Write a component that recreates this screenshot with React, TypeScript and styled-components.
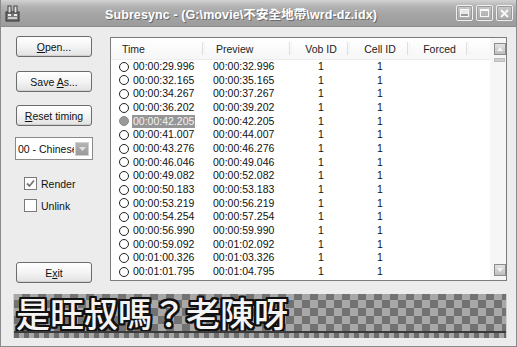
import React from "react";
import styled, { createGlobalStyle } from "styled-components";

const Global = createGlobalStyle`
  html, body { margin: 0; padding: 0; background: #ececec; }
  body { font-family: "Liberation Sans", Arial, "Noto Sans CJK TC", sans-serif; }
`;

const Window = styled.div`
  width: 517px;
  height: 347px;
  box-sizing: border-box;
  display: flex;
  flex-direction: column;
  background: #ececec;
  border: 1px solid #8a8a8a;
  border-top: none;
  overflow: hidden;
`;

const TitleBar = styled.div`
  height: 27px;
  flex: none;
  display: flex;
  align-items: center;
  padding: 0 3px 0 4px;
  background: linear-gradient(#d2d2d2 0%, #b2b2b2 25%, #a4a4a4 60%, #9c9c9c 100%);
  border-bottom: 1px solid #8c8c8c;
  box-sizing: border-box;
`;

const Title = styled.div`
  flex: 1;
  text-align: center;
  color: #fff;
  font-weight: bold;
  font-size: 12.5px;
  letter-spacing: 0.1px;
  text-shadow: 1px 1px 0 #6a6a6a;
  white-space: nowrap;
  padding-left: 6px;
  font-family: "Liberation Sans", Arial, "Noto Sans CJK TC", sans-serif;
`;

const CaptionButtons = styled.div`
  display: flex;
  gap: 3px;
`;

const CaptionButton = styled.div`
  width: 15px;
  height: 14px;
  border: 1px solid #f0f0f0;
  border-radius: 2px;
  background: linear-gradient(#c8c8c8, #a8a8a8);
  display: flex;
  align-items: center;
  justify-content: center;
  box-shadow: inset 0 0 0 1px #9a9a9a;
`;

const Main = styled.div`
  display: flex;
  gap: 16px;
  padding: 9px 9px 0 15px;
`;

const LeftCol = styled.div`
  width: 78px;
  display: flex;
  flex-direction: column;
  flex: none;
`;

const PushButton = styled.div<{ $mt?: number }>`
  width: 76px;
  height: 21px;
  margin-top: ${(p) => p.$mt ?? 0}px;
  box-sizing: border-box;
  border: 1px solid #6c6c6c;
  border-radius: 3px;
  background: linear-gradient(#ffffff 0%, #f4f4f4 50%, #e2e2e2 100%);
  box-shadow: inset 0 -1px 0 #d0d0d0;
  display: flex;
  align-items: center;
  justify-content: center;
  font-size: 10.5px;
  color: #111;
  u { text-decoration: underline; text-underline-offset: 1px; }
`;

const Combo = styled.div<{ $mt?: number }>`
  width: 78px;
  height: 23px;
  margin-top: ${(p) => p.$mt ?? 0}px;
  margin-left: -1px;
  box-sizing: border-box;
  border: 1px solid #8a8a8a;
  background: #fff;
  display: flex;
  align-items: center;
  padding: 0 2px 0 2px;
  gap: 1px;
`;

const ComboText = styled.div`
  flex: 1;
  overflow: hidden;
  white-space: nowrap;
  font-size: 10.5px;
  color: #111;
`;

const ComboDrop = styled.div`
  width: 14px;
  height: 14px;
  flex: none;
  box-sizing: border-box;
  border: 1px solid #d0d0d0;
  background: linear-gradient(#b4b4b4, #9a9a9a);
  display: flex;
  align-items: center;
  justify-content: center;
  margin-right: 1px;
`;

const CheckRow = styled.div<{ $mt?: number }>`
  margin-top: ${(p) => p.$mt ?? 0}px;
  padding-left: 8px;
  display: flex;
  align-items: center;
  gap: 4px;
  height: 13px;
  font-size: 10.5px;
  color: #111;
`;

const CheckBox = styled.div`
  width: 13px;
  height: 13px;
  box-sizing: border-box;
  border: 1px solid #7a7a7a;
  background: #fff;
  display: flex;
  align-items: center;
  justify-content: center;
`;

const List = styled.div`
  margin-top: 1px;
  width: 400px;
  height: 244px;
  box-sizing: border-box;
  border: 1px solid #7c7c7c;
  background: #fff;
  display: flex;
  overflow: hidden;
`;

const Table = styled.div`
  width: 379px;
  flex: none;
  display: flex;
  flex-direction: column;
  overflow: hidden;
`;

const cols = "94px 87px 58px 60px 59px 1fr";

const Header = styled.div`
  height: 22px;
  flex: none;
  display: grid;
  grid-template-columns: ${cols};
  background: linear-gradient(#ffffff, #f6f6f6);
  border-bottom: 1px solid #ededed;
  box-sizing: border-box;
`;

const HeaderCell = styled.div<{ $center?: boolean; $sep?: boolean }>`
  display: flex;
  align-items: center;
  justify-content: ${(p) => (p.$center ? "center" : "flex-start")};
  padding-left: ${(p) => (p.$center ? 0 : 11)}px;
  font-size: 10.5px;
  color: #222;
  position: relative;
  ${(p) =>
    p.$sep
      ? `&::after { content: ""; position: absolute; right: 0; top: 4px; bottom: 4px; width: 1px; border-left: 1px solid #dedede; border-right: 1px solid #f4f4f4; }`
      : ""}
`;

const Row = styled.div`
  height: 13.67px;
  display: grid;
  grid-template-columns: ${cols};
  font-size: 10.5px;
  color: #111;
  line-height: 13.67px;
  flex: none;
`;

const TimeCell = styled.div`
  display: flex;
  align-items: center;
  padding-left: 8px;
  gap: 3px;
  white-space: nowrap;
`;

const Radio = styled.div<{ $on?: boolean }>`
  width: 10px;
  height: 10px;
  border-radius: 50%;
  box-sizing: border-box;
  border: 1px solid ${(p) => (p.$on ? "#8a8a8a" : "#222")};
  background: ${(p) => (p.$on ? "#9a9a9a" : "#fff")};
  flex: none;
`;

const TimeText = styled.span<{ $sel?: boolean }>`
  padding: 0 1px;
  background: ${(p) => (p.$sel ? "#969696" : "transparent")};
  color: ${(p) => (p.$sel ? "#f4f4f4" : "#111")};
`;

const PlainCell = styled.div<{ $center?: boolean }>`
  padding-left: ${(p) => (p.$center ? 0 : 8)}px;
  text-align: ${(p) => (p.$center ? "center" : "left")};
  white-space: nowrap;
`;

const ScrollBar = styled.div`
  width: 19px;
  flex: none;
  background: #f6f6f6;
  display: flex;
  flex-direction: column;
  align-items: center;
  padding: 5px 0 4px 0;
  box-sizing: border-box;
`;

const ScrollButton = styled.div`
  width: 12px;
  height: 12px;
  box-sizing: border-box;
  border: 1px solid #8c8c8c;
  background: linear-gradient(#e4e4e4, #bdbdbd);
  display: flex;
  align-items: center;
  justify-content: center;
`;

const Thumb = styled.div`
  width: 11px;
  height: 4px;
  margin-top: 3px;
  background: #cfcfcf;
  border: 1px solid #bbbbbb;
  box-sizing: border-box;
`;

const Spacer = styled.div`
  flex: 1;
`;

const Strip = styled.div`
  margin: 11px 9px 0 12px;
  height: 44px;
  display: flex;
  flex-direction: column;
  border-left: 1px solid #cfcfcf;
  border-right: 1px solid #cfcfcf;
`;

const Checker = styled.div`
  height: 37px;
  background-color: #a6a6a6;
  background-image: conic-gradient(#727272 25%, #a8a8a8 0 50%, #727272 0 75%, #a8a8a8 0);
  background-size: 16px 16px;
  background-position: 0 -2px;
  display: flex;
  align-items: center;
  padding-left: 2px;
`;

const Subtitle = styled.div`
  font-family: "Noto Sans CJK TC", "Noto Sans CJK SC", sans-serif;
  font-weight: 500;
  font-size: 34px;
  line-height: 37px;
  color: #f4f4f4;
  white-space: nowrap;
  text-shadow:
    2px 0 0 #111, -2px 0 0 #111, 0 2px 0 #111, 0 -2px 0 #111,
    2px 2px 0 #111, -2px -2px 0 #111, 2px -2px 0 #111, -2px 2px 0 #111,
    1px 2px 0 #111, 2px 1px 0 #111, -1px 2px 0 #111, -2px 1px 0 #111,
    1px -2px 0 #111, 2px -1px 0 #111, -1px -2px 0 #111, -2px -1px 0 #111;
`;

const StripLine = styled.div`
  height: 2px;
  background: #3a3a3a;
`;

const SmallChecks = styled.div`
  height: 5px;
  background-color: #9a9a9a;
  background-image: linear-gradient(90deg, #6c6c6c 50%, #a8a8a8 50%);
  background-size: 10px 5px;
`;

const rows: [string, string][] = [
  ["00:00:29.996", "00:00:32.996"],
  ["00:00:32.165", "00:00:35.165"],
  ["00:00:34.267", "00:00:37.267"],
  ["00:00:36.202", "00:00:39.202"],
  ["00:00:42.205", "00:00:42.205"],
  ["00:00:41.007", "00:00:44.007"],
  ["00:00:43.276", "00:00:46.276"],
  ["00:00:46.046", "00:00:49.046"],
  ["00:00:49.082", "00:00:52.082"],
  ["00:00:50.183", "00:00:53.183"],
  ["00:00:53.219", "00:00:56.219"],
  ["00:00:54.254", "00:00:57.254"],
  ["00:00:56.990", "00:00:59.990"],
  ["00:00:59.092", "00:01:02.092"],
  ["00:01:00.326", "00:01:03.326"],
  ["00:01:01.795", "00:01:04.795"],
];

const AppIcon = () => (
  <svg width="15" height="17" viewBox="0 0 15 17">
    <rect x="1" y="7" width="13" height="9" fill="#777" stroke="#333" strokeWidth="1" />
    <rect x="3" y="1" width="3" height="7" fill="#ddd" stroke="#444" strokeWidth="1" />
    <rect x="9" y="1" width="3" height="7" fill="#ddd" stroke="#444" strokeWidth="1" />
    <rect x="3" y="9" width="3" height="2" fill="#eee" />
    <rect x="9" y="9" width="3" height="2" fill="#eee" />
    <rect x="3" y="12" width="9" height="2" fill="#ccc" />
  </svg>
);

export default function App() {
  return (
    <>
      <Global />
      <Window>
        <TitleBar>
          <AppIcon />
          <Title>Subresync - (G:\movie\不安全地帶\wrd-dz.idx)</Title>
          <CaptionButtons>
            <CaptionButton>
              <svg width="9" height="8" viewBox="0 0 9 8">
                <rect x="0.5" y="0.5" width="8" height="7" fill="#e8e8e8" stroke="#f8f8f8" />
                <rect x="1" y="5" width="7" height="2" fill="#9a9a9a" />
              </svg>
            </CaptionButton>
            <CaptionButton>
              <svg width="9" height="8" viewBox="0 0 9 8">
                <rect x="0.5" y="0.5" width="8" height="7" fill="none" stroke="#f8f8f8" />
                <rect x="0" y="0" width="9" height="2" fill="#f8f8f8" />
              </svg>
            </CaptionButton>
            <CaptionButton>
              <svg width="9" height="9" viewBox="0 0 9 9">
                <path d="M1 1 L8 8 M8 1 L1 8" stroke="#f8f8f8" strokeWidth="2" />
              </svg>
            </CaptionButton>
          </CaptionButtons>
        </TitleBar>
        <Main>
          <LeftCol>
            <PushButton>
              <span><u>O</u>pen...</span>
            </PushButton>
            <PushButton $mt={14}>
              <span>Save <u>A</u>s...</span>
            </PushButton>
            <PushButton $mt={13}>
              <span><u>R</u>eset timing</span>
            </PushButton>
            <Combo $mt={11}>
              <ComboText>00 - Chinese</ComboText>
              <ComboDrop>
                <svg width="7" height="4" viewBox="0 0 7 4">
                  <path d="M0 0 L7 0 L3.5 4 Z" fill="#e0e0e0" />
                </svg>
              </ComboDrop>
            </Combo>
            <CheckRow $mt={17}>
              <CheckBox>
                <svg width="9" height="9" viewBox="0 0 9 9">
                  <path d="M1 4.5 L3.5 7 L8 1.5" stroke="#777" strokeWidth="1.8" fill="none" />
                </svg>
              </CheckBox>
              Render
            </CheckRow>
            <CheckRow $mt={9}>
              <CheckBox />
              Unlink
            </CheckRow>
            <PushButton $mt={50}>
              <span>E<u>x</u>it</span>
            </PushButton>
          </LeftCol>
          <List>
            <Table>
              <Header>
                <HeaderCell $sep>Time</HeaderCell>
                <HeaderCell $sep>Preview</HeaderCell>
                <HeaderCell $center $sep>Vob ID</HeaderCell>
                <HeaderCell $center $sep>Cell ID</HeaderCell>
                <HeaderCell $center $sep>Forced</HeaderCell>
                <HeaderCell />
              </Header>
              {rows.map(([t, p], i) => (
                <Row key={i}>
                  <TimeCell>
                    <Radio $on={i === 4} />
                    <TimeText $sel={i === 4}>{t}</TimeText>
                  </TimeCell>
                  <PlainCell>{p}</PlainCell>
                  <PlainCell $center>1</PlainCell>
                  <PlainCell $center>1</PlainCell>
                  <PlainCell $center />
                  <PlainCell />
                </Row>
              ))}
            </Table>
            <ScrollBar>
              <ScrollButton>
                <svg width="6" height="4" viewBox="0 0 6 4">
                  <path d="M0 4 L6 4 L3 0 Z" fill="#f4f4f4" />
                </svg>
              </ScrollButton>
              <Thumb />
              <Spacer />
              <ScrollButton>
                <svg width="6" height="4" viewBox="0 0 6 4">
                  <path d="M0 0 L6 0 L3 4 Z" fill="#f4f4f4" />
                </svg>
              </ScrollButton>
            </ScrollBar>
          </List>
        </Main>
        <Strip>
          <Checker>
            <Subtitle>是旺叔嗎？老陳呀</Subtitle>
          </Checker>
          <StripLine />
          <SmallChecks />
        </Strip>
      </Window>
    </>
  );
}
